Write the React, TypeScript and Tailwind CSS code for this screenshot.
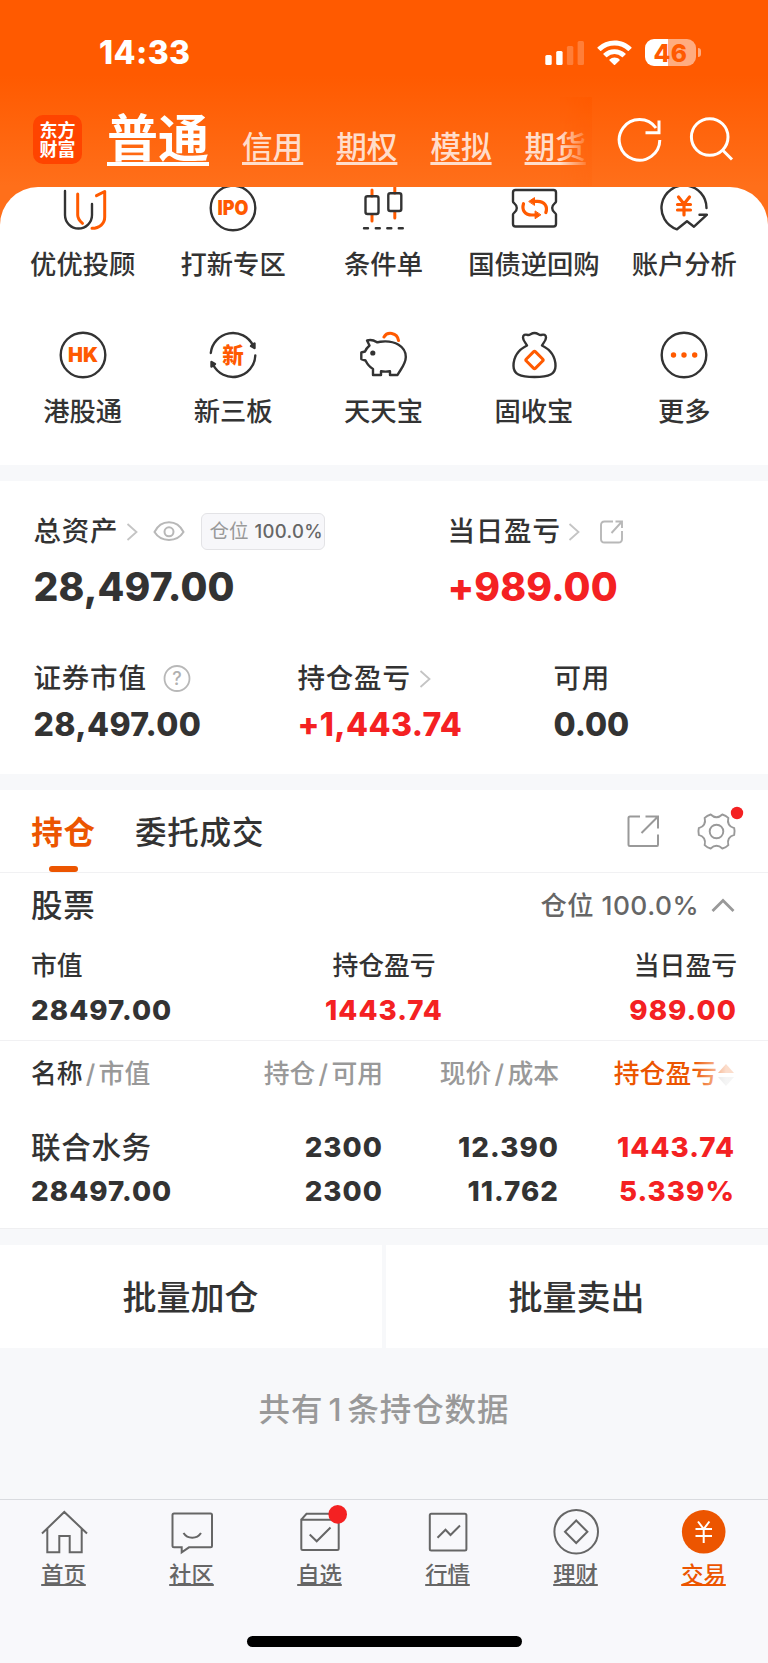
import type { ReactNode } from 'react';
import clsx from 'clsx';

const shortcuts: { label: string; icon: ReactNode }[] = [
  {
    label: '优优投顾',
    icon: (
      <>
        <path d="M6 7v24a13.5 13.5 0 0 0 27 0V20" />
        <path d="M18.7 10v21c0 3.5 2 6 4.8 8.300M37.500 11.700l8.200-4.200V33c0 6.500-5 11.300-12.700 11.300" stroke="#ff5a00" strokeWidth={3} />
      </>
    ),
  },
  {
    label: '打新专区',
    icon: (
      <>
        <circle cx={24} cy={24} r={22.3} />
        <IconText size={20} width={31}>IPO</IconText>
      </>
    ),
  },
  {
    label: '条件单',
    icon: (
      <>
        <path d="M13 6v6M13 31v6M35.800 0v9M35.800 28v6" stroke="#ff5a00" strokeWidth={3} />
        <rect x={6.5} y={12.3} width={13} height={17.7} rx={2} />
        <rect x={29.3} y={9.3} width={13} height={17.7} rx={2} />
        <path d="M5 44.300h4M16.800 44.300h4M28.300 44.300h4M39.800 44.300h4" />
      </>
    ),
  },
  {
    label: '国债逆回购',
    icon: (
      <>
        <path d="M5.500 6h38q2.500 0 2.500 2.500V17.500c0 2-3.800 2-3.800 6.500s3.800 4.500 3.800 6.500V40q0 2.500-2.500 2.500h-38Q3 42.500 3 40v-9.500C3 28.500 6.800 28.500 6.800 24S3 19.500 3 17.500V8.500Q3 6 5.500 6z" />
        <path d="M24 17.300h3.500c7 0 10.500 5 8.300 11.300M25.500 31H22C15 31 11.500 26 13.500 19.700" stroke="#ff5a00" strokeWidth={3.2} />
        <path d="M19 17.300l5.500-3.700v7.400zM30.600 31l-5.500 3.700v-7.400z" fill="#ff5a00" stroke="#ff5a00" strokeWidth={1} />
      </>
    ),
  },
  {
    label: '账户分析',
    icon: (
      <>
        <path d="M46.500 24A22.500 22.500 0 1 0 17 45.300l10-8 7 5.400 13-12H39.500" />
        <path d="M18.500 13l5.500 7 5.500-7M24 20v11M17.500 20.500h13M17.500 26h13" stroke="#ff5a00" strokeWidth={3.2} />
      </>
    ),
  },
  {
    label: '港股通',
    icon: (
      <>
        <circle cx={24} cy={24} r={22.3} />
        <IconText size={20.5} width={30}>HK</IconText>
      </>
    ),
  },
  {
    label: '新三板',
    icon: (
      <>
        <path d="M1.800 22A22.300 22.300 0 0 1 44 14.500M46.300 24.500A22.300 22.300 0 0 1 4 33.500" />
        <path d="M45.500 12.500v4.500l-3.500-2zM2.500 35.500v-4.500l3.500 2z" fill="#333" />
        <IconText size={21.5} width={21.5}>新</IconText>
      </>
    ),
  },
  {
    label: '天天宝',
    icon: (
      <>
        <path d="M8 9.500c3-.8 6.500-.5 9.500 1.500q1.500.5 4-.3C36 9 46.800 15.500 46.800 26c0 7-5 12-8.300 18H31v-3.800c-3 .6-6 .6-9 0V44h-8v-6C10.500 36 8 32.500 6.500 29.500L2.300 28v-6.500l3.700-1c1-2.500 2.500-4.200 4.500-6z" />
        <circle cx={13.8} cy={22} r={2.6} fill="#333" stroke="none" />
        <path d="M25 6c3-5.500 13-5 14.500 3.500" stroke="#ff5a00" strokeWidth={3} />
      </>
    ),
  },
  {
    label: '固收宝',
    icon: (
      <>
        <path d="M17 14.500c-1-2.500-4-4.500-4-8 0-2.500 2-3.500 5-2.500 2 .5 3-2 6.500-2s4.500 2.500 6.500 2c3-1 5 0 5 2.500 0 3.500-3 5.500-4 8 9 4.500 13.500 11.500 13.500 20.500 0 8-6 11-21 11s-21-3-21-11c0-9 4.500-16 13.500-20.500z" />
        <rect x={18} y={22.5} width={13} height={13} rx={1.5} transform="rotate(45 24.500 29)" stroke="#ff5a00" strokeWidth={3} />
      </>
    ),
  },
  {
    label: '更多',
    icon: (
      <>
        <circle cx={24} cy={24} r={22.3} />
        <g fill="#ff5a00" stroke="none">
          <circle cx={13.5} cy={24} r={2.7} />
          <circle cx={24} cy={24} r={2.7} />
          <circle cx={34.7} cy={24} r={2.7} />
        </g>
      </>
    ),
  },
];

const tabs: { label: string; icon: ReactNode; active?: boolean }[] = [
  { label: '首页', icon: <path d="M2 25.500L24.300 4 47 25.500M7.300 21v23.300h12V28h10.400v16.300h12V21" /> },
  {
    label: '社区',
    icon: <path d="M6 5.500h36.500q1.500 0 1.500 1.500v30.800q0 1.500-1.500 1.500H21l-7.300 5v-5H6q-1.500 0-1.500-1.500V7q0-1.500 1.500-1.500zM15.500 25c4 6.300 13.500 6.300 17.500 0" />,
  },
  {
    label: '自选',
    icon: (
      <>
        <path d="M5.300 11.700L10.500 5.800h27l5.200 5.900M5.300 11.700h37.400v28.800q0 1.500-1.500 1.500H6.800q-1.500 0-1.500-1.500zM13.700 26.500l7 6.800 13.800-13.800" />
        <circle cx={41.7} cy={6.4} r={9.3} fill="#f42122" stroke="none" />
      </>
    ),
  },
  {
    label: '行情',
    icon: (
      <>
        <rect x={5.8} y={5.8} width={36.6} height={36.6} rx={1.5} />
        <path d="M13.500 29.700l8-8 5 5.300 9.500-9.500" />
      </>
    ),
  },
  {
    label: '理财',
    icon: (
      <>
        <circle cx={24.2} cy={23.7} r={21.8} />
        <path d="M24.200 12.500l11.200 11.300L24.200 35 13 23.800z" />
      </>
    ),
  },
  {
    label: '交易',
    active: true,
    icon: (
      <>
        <circle cx={23.7} cy={23.8} r={21.8} fill="#ec5500" stroke="none" />
        <path d="M18 13.500l5.700 7.500 5.700-7.500M23.700 21v14M15.500 21h16.500M15.500 28h16.500" stroke="#fff" />
      </>
    ),
  },
];

// Six lobes joined by shallow concave curves
const gearPath =
  [0, 60, 120, 180, 240, 300]
    .map((deg, i) => {
      const at = (d: number, r: number) => {
        const a = (d * Math.PI) / 180;
        return `${(20 + r * Math.cos(a)).toFixed(2)} ${(20 + r * Math.sin(a)).toFixed(2)}`;
      };
      return `${i === 0 ? 'M' : 'L'}${at(deg - 11, 18)}Q${at(deg, 18.6)} ${at(deg + 11, 18)}Q${at(deg + 30, 11.5)} ${at(deg + 49, 18)}`;
    })
    .join('') + 'Z';

function IconText({ size, width, children }: { size: number; width: number; children: string }) {
  return (
    <text x={24} y={24 + size * 0.364} textAnchor="middle" fontSize={size} fontWeight={900} textLength={width} lengthAdjust="spacingAndGlyphs" fill="#ff5a00" stroke="none">
      {children}
    </text>
  );
}

function Chevron() {
  return (
    <svg className="h-5 w-3 shrink-0 fill-none stroke-[#c4c4c4]" viewBox="0 0 12 20" strokeWidth={1.8}>
      <path d="M1.500 2l9 8-9 8" />
    </svg>
  );
}

function StatusBar() {
  return (
    <div className="flex h-[105px] items-center pl-[99px] text-white">
      <span className="w-[446px] text-[32px] leading-8 font-extrabold tracking-[0.4px]">14:33</span>
      <svg className="h-6 w-10 fill-white" viewBox="0 0 40 24">
        <rect x={0.3} y={14} width={6.4} height={10} rx={1.5} />
        <rect x={11.2} y={10} width={6.4} height={14} rx={1.5} />
        <rect x={21.9} y={5} width={6.4} height={19} rx={1.5} opacity={0.22} />
        <rect x={32.6} y={0} width={6.4} height={24} rx={1.5} opacity={0.22} />
      </svg>
      <svg className="ml-3 h-[26px] w-[35px] fill-white" viewBox="0 0 35 26">
        <path d="M17.500 0.500c6.700 0 12.600 2.600 16.900 6.800q.5.500 0 1l-2.600 2.500q-.5.500-1 0a19.300 19.300 0 0 0-26.600 0q-.5.500-1 0L.6 8.300q-.5-.5 0-1A24.300 24.300 0 0 1 17.500.5z" />
        <path d="M17.500 9.200c4.300 0 8.100 1.600 11 4.300q.5.500 0 1L25.900 17q-.5.500-1 0a10.900 10.900 0 0 0-14.800 0q-.5.500-1 0l-2.600-2.500q-.5-.5 0-1a16 16 0 0 1 11-4.300z" />
        <path d="M17.500 17.500c2 0 3.700.7 5 1.900q.5.500 0 1l-4.400 4.400q-.6.600-1.200 0l-4.400-4.400q-.5-.5 0-1a7.500 7.500 0 0 1 5-1.900z" />
      </svg>
      <div className="ml-[13px] flex h-[27px] w-[51px] items-center justify-center rounded-[9px] bg-[linear-gradient(90deg,#fff_45%,#ffac80_45%)] text-[24.5px] leading-6 font-extrabold tracking-[0.5px] text-[#ff5a00]">
        46
      </div>
      <div className="ml-0.5 h-[9px] w-[3px] rounded-r-full bg-[#ffac80]" />
    </div>
  );
}

function Nav() {
  return (
    <div className="flex h-[70px] items-center pl-[33px] text-white">
      <div className="-mt-px flex h-[49px] w-[49px] flex-col items-center justify-center rounded-[10px] bg-[#ff4400] text-[18px] leading-[19px] font-bold">
        <span>东方</span>
        <span>财富</span>
      </div>
      <div className="relative ml-[25px] flex h-[70px] w-[485px] items-center gap-[33px] whitespace-nowrap">
        <span className="-mt-0.5 text-[51px] leading-[56px] font-bold underline decoration-4 underline-offset-[5px] [text-decoration-skip-ink:none]">普通</span>
        {['信用', '期权', '模拟', '期货'].map((name) => (
          <span key={name} className="mt-3.5 text-[30.6px] leading-9 font-medium text-[#ffddcb] underline decoration-[2.5px] underline-offset-[3.5px] [text-decoration-skip-ink:none]">
            {name}
          </span>
        ))}
        <div className="absolute -top-2 right-0 h-[89px] w-8 bg-linear-to-b from-[#ff5a00] to-[#ff6c16] [mask-image:linear-gradient(90deg,transparent,#000)]" />
      </div>
      <svg className="ml-6 h-12 w-12 fill-none stroke-white" viewBox="0 0 48 48" strokeWidth={3}>
        <path d="M43.800 24A20.300 20.300 0 1 1 40 12M43 4.500v12.300H29.500" />
      </svg>
      <svg className="ml-6 h-12 w-12 fill-none stroke-white" viewBox="0 0 48 48" strokeWidth={3}>
        <circle cx={21.7} cy={21} r={18.3} />
        <path d="M34.500 34l9.500 9.500" />
      </svg>
    </div>
  );
}

function Assets() {
  return (
    <section className="h-[293px] bg-white pt-8 pl-[33.5px] font-medium">
      <div className="grid grid-cols-[414px_1fr]">
        <div>
          <div className="flex h-[37px] items-center">
            <span className="w-[92px] text-[27.5px] tracking-[0.8px]">总资产</span>
            <Chevron />
            <svg className="ml-[15px] h-6 w-8 fill-none stroke-[#b8b8b8]" viewBox="0 0 32 24" strokeWidth={2}>
              <path d="M1.500 12C8-1 24-1 30.500 12 24 22.500 8 22.500 1.500 12z" />
              <circle cx={16} cy={11.8} r={4.5} />
            </svg>
            <div className="ml-4 flex h-[37px] w-[124px] items-center gap-[6px] rounded-md border border-[#e3e3e6] bg-[#f7f7fa] pl-2 whitespace-nowrap">
              <span className="text-[19.5px] font-normal text-[#999]">仓位</span>
              <span className="text-[18.5px] tracking-[0.3px] text-[#666]">100.0%</span>
            </div>
          </div>
          <div className="mt-[15px] text-[39px] leading-[44px] font-extrabold tracking-[0.1px]">28,497.00</div>
        </div>
        <div>
          <div className="flex h-[37px] items-center">
            <span className="w-[120px] text-[27.5px] tracking-[0.8px]">当日盈亏</span>
            <Chevron />
            <svg className="ml-5 h-6 w-6 fill-none stroke-[#b8b8b8]" viewBox="0 0 24 24" strokeWidth={1.9}>
              <path d="M13 1.500H4.500q-3.500 0-3.500 3.500v14q0 3.500 3.500 3.500h14q3.500 0 3.500-3.500V11M15.500 1.500H22V8M22 1.500L11.500 13" />
            </svg>
          </div>
          <div className="mt-[15px] text-[39px] leading-[44px] font-extrabold tracking-[0.1px] text-[#f42122]">+989.00</div>
        </div>
      </div>

      <div className="mt-[52px] grid grid-cols-[264px_256px_1fr]">
        <div>
          <div className="flex h-9 items-center">
            <span className="w-[129px] text-[27.5px] tracking-[0.8px]">证券市值</span>
            <svg className="h-7 w-7" viewBox="0 0 28 28">
              <circle cx={14} cy={13.5} r={12.5} className="fill-none stroke-[#b8b8b8]" strokeWidth={1.8} />
              <text x={14} y={20} textAnchor="middle" fontSize={18} className="fill-[#b0b0b0]">?</text>
            </svg>
          </div>
          <div className="mt-2.5 text-[32px] leading-9 font-extrabold tracking-[0.4px]">28,497.00</div>
        </div>
        <div>
          <div className="flex h-9 items-center">
            <span className="w-[121px] text-[27.5px] tracking-[0.8px]">持仓盈亏</span>
            <Chevron />
          </div>
          <div className="mt-2.5 text-[32px] leading-9 font-extrabold tracking-[0.4px] text-[#f42122]">+1,443.74</div>
        </div>
        <div>
          <div className="flex h-9 items-center text-[27.5px] tracking-[0.8px]">可用</div>
          <div className="mt-2.5 text-[32px] leading-9 font-extrabold">0.00</div>
        </div>
      </div>
    </section>
  );
}

function Positions() {
  return (
    <section className="mt-4 bg-white font-medium">
      <div className="flex h-[83px] border-b border-[#f1f1f3] pr-[30px] pl-[31px] text-[31.5px] tracking-[0.8px] whitespace-nowrap">
        <div className="flex w-[65px] flex-col items-center font-bold text-[#ec5500]">
          <span className="h-[76px] leading-[85px]">持仓</span>
          <span className="h-1.5 w-[29px] rounded-[3px] bg-[#ec5500]" />
        </div>
        <span className="ml-[39px] leading-[85px]">委托成交</span>
        <svg className="mt-[25px] ml-auto h-8 w-8 fill-none stroke-[#999]" viewBox="0 0 32 32" strokeWidth={2}>
          <path d="M13 1.500H3Q1.500 1.500 1.500 3v26.500Q1.500 31 3 31h27q1 0 1-1.500V19.500M18.500 1.500H31v12M31 1.500L14.500 18" />
        </svg>
        <svg className="mt-[13px] ml-[37px] h-12 w-[42px] overflow-visible fill-none stroke-[#999]" viewBox="0 0 42 48" strokeWidth={1.9}>
          <g transform="translate(0.500 8.500)">
            <path d={gearPath} />
            <circle cx={20} cy={20} r={6.8} />
          </g>
          <circle cx={41} cy={10} r={6.2} className="fill-[#f42122]" stroke="none" />
        </svg>
      </div>

      <div className="flex h-[66px] items-center pr-[33px] pl-[31px]">
        <span className="text-[31.5px] tracking-[0.8px]">股票</span>
        <span className="mr-3 ml-auto text-[26.3px] tracking-[0.5px] text-[#666]">仓位 100.0%</span>
        <svg className="h-4 w-6 fill-none stroke-[#999]" viewBox="0 0 24 16" strokeWidth={2.8}>
          <path d="M1.500 13L12 2.500 22.500 13" />
        </svg>
      </div>

      <div className="grid h-[102px] grid-cols-3 content-start border-b border-[#f1f1f3] pt-[9px] pr-[31px] pl-[31px]">
        <Stat label="市值" value="28497.00" />
        <Stat label="持仓盈亏" value="1443.74" className="text-center" red />
        <Stat label="当日盈亏" value="989.00" className="text-right" red />
      </div>

      <div className="grid h-[65px] grid-cols-[172px_180px_176px_175px] items-center pt-0.5 pl-[31px] text-[25.8px] text-[#999]">
        <span>
          <span className="text-[#333]">名称</span>
          <Slash />
          市值
        </span>
        <span className="text-right">
          持仓
          <Slash />
          可用
        </span>
        <span className="text-right">
          现价
          <Slash />
          成本
        </span>
        <span className="relative flex items-center justify-end text-[#ec5500]">
          持仓盈亏
          <svg className="h-6 w-[17px]" viewBox="0 0 17 24">
            <path d="M9 1l8 9H1z" fill="#ec5500" />
            <path d="M9 23l8-9H1z" fill="#ccc" />
          </svg>
          <span className="absolute inset-y-0 right-0 w-10 bg-linear-to-r from-transparent to-white/80 to-80%" />
        </span>
      </div>

      <div className="grid h-[123px] grid-cols-[172px_180px_176px_176px] content-start border-b border-[#efeff1] pt-[19px] pl-[31px] text-[27.7px] leading-[44.3px] font-extrabold tracking-[1.05px]">
        <span className="text-[29.5px] font-medium tracking-[0.7px]">联合水务</span>
        <span className="text-right">2300</span>
        <span className="text-right">12.390</span>
        <span className="text-right text-[#f42122]">1443.74</span>
        <span>28497.00</span>
        <span className="text-right">2300</span>
        <span className="text-right">11.762</span>
        <span className="text-right text-[#f42122]">5.339%</span>
      </div>
    </section>
  );
}

function Slash() {
  return <span className="inline-block w-4 text-center">/</span>;
}

function Stat({ label, value, className, red }: { label: string; value: string; className?: string; red?: boolean }) {
  return (
    <div className={className}>
      <div className="text-[25.8px] leading-[36px]">{label}</div>
      <div className={clsx('mt-2 text-[27.7px] leading-[36px] font-extrabold tracking-[1.05px]', red && 'text-[#f42122]')}>{value}</div>
    </div>
  );
}

function TabBar() {
  return (
    <nav className="mt-auto h-[164px] border-t border-[#d9dbdf] bg-[#f8f8fb]">
      <div className="grid grid-cols-6 pt-2">
        {tabs.map((tab) => (
          <div key={tab.label} className={clsx('flex flex-col items-center pr-px', tab.active ? 'text-[#ec5500]' : 'text-[#666]')}>
            <svg className="h-12 w-12 overflow-visible fill-none stroke-[#666]" viewBox="0 0 48 48" strokeWidth={2}>
              {tab.icon}
            </svg>
            <span className="mt-[5px] text-[22.3px] leading-7 font-medium underline decoration-[1.5px] underline-offset-1 [text-decoration-skip-ink:none]">{tab.label}</span>
          </div>
        ))}
      </div>
      <div className="mx-auto mt-[47px] h-[11px] w-[275px] rounded-full bg-black" />
    </nav>
  );
}

export default function App() {
  return (
    <div className="flex h-[1663px] w-[768px] flex-col overflow-hidden bg-[#f7f8fa] font-['Inter','Noto_Sans_CJK_SC',sans-serif] text-[#333]">
      <header className="h-[465px] bg-[linear-gradient(#ff5a00_75px,#ff6f1a_186px)]">
        <StatusBar />
        <Nav />
        <div className="mt-[11.5px] h-[278.5px] overflow-hidden rounded-t-[38px] bg-white px-2">
          <div className="-mt-[3px] grid grid-cols-5 gap-y-[51px]">
            {shortcuts.map((item) => (
              <div key={item.label} className="flex flex-col items-center pr-px">
                <svg className="h-12 w-12 fill-none stroke-[#333]" viewBox="0 0 48 48" strokeWidth={2.4} strokeLinecap="round" strokeLinejoin="round">
                  {item.icon}
                </svg>
                <span className="mt-[17px] -mb-px text-[26.3px] leading-8 font-medium whitespace-nowrap">{item.label}</span>
              </div>
            ))}
          </div>
        </div>
      </header>

      <div className="h-4 shrink-0" />
      <Assets />
      <Positions />

      <div className="mt-4 grid h-[103px] grid-cols-2 gap-1 text-[34px] font-medium">
        <button className="bg-white pt-0.5 pr-px">批量加仓</button>
        <button className="bg-white pt-0.5 pr-px">批量卖出</button>
      </div>
      <p className="mt-11 text-center text-[31.5px] leading-9 font-medium tracking-[0.9px] text-[#999]">
        共有<span className="px-[5px]">1</span>条持仓数据
      </p>

      <TabBar />
    </div>
  );
}
